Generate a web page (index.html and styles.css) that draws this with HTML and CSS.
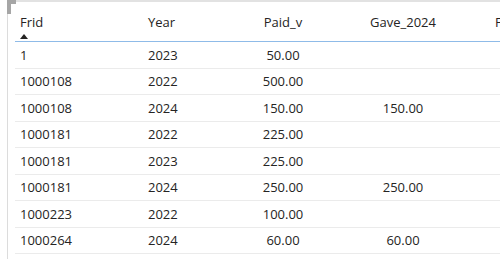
FILE: index.html
```html
<!DOCTYPE html>
<html>
<head>
<meta charset="utf-8">
<link rel="stylesheet" href="styles.css">
</head>
<body>
<div class="visual">
  <div class="corner"></div>
  <div class="table">
    <div class="row head">
      <div class="cell left"><span>Frid</span><svg class="sort" width="8" height="5" viewBox="0 0 8 5"><path d="M0 5 L4 0 L8 5 Z" fill="#252423"/></svg></div>
      <div class="cell left"><span>Year</span></div>
      <div class="cell center"><span>Paid_v</span></div>
      <div class="cell center"><span>Gave_2024</span></div>
      <div class="cell last"><span>Frid_2024</span></div>
    </div>
    <div class="row"><div class="cell left">1</div><div class="cell left">2023</div><div class="cell center">50.00</div><div class="cell center"></div><div class="cell last"></div></div>
    <div class="row"><div class="cell left">1000108</div><div class="cell left">2022</div><div class="cell center">500.00</div><div class="cell center"></div><div class="cell last"></div></div>
    <div class="row"><div class="cell left">1000108</div><div class="cell left">2024</div><div class="cell center">150.00</div><div class="cell center">150.00</div><div class="cell last"></div></div>
    <div class="row"><div class="cell left">1000181</div><div class="cell left">2022</div><div class="cell center">225.00</div><div class="cell center"></div><div class="cell last"></div></div>
    <div class="row"><div class="cell left">1000181</div><div class="cell left">2023</div><div class="cell center">225.00</div><div class="cell center"></div><div class="cell last"></div></div>
    <div class="row"><div class="cell left">1000181</div><div class="cell left">2024</div><div class="cell center">250.00</div><div class="cell center">250.00</div><div class="cell last"></div></div>
    <div class="row"><div class="cell left">1000223</div><div class="cell left">2022</div><div class="cell center">100.00</div><div class="cell center"></div><div class="cell last"></div></div>
    <div class="row"><div class="cell left">1000264</div><div class="cell left">2024</div><div class="cell center">60.00</div><div class="cell center">60.00</div><div class="cell last"></div></div>
  </div>
</div>
</body>
</html>
```
FILE: styles.css
```css
html, body {
  margin: 0;
  padding: 0;
  background: #ffffff;
  overflow: hidden;
}
body {
  font-family: "Open Sans", "Noto Sans", sans-serif;
  font-size: 13px;
  color: #252423;
  width: 500px;
  height: 259px;
}
.visual {
  position: relative;
  margin-left: 7px;
  border-left: 1px solid #dcdcdc;
  border-top: 2px solid #e2e2e2;
  padding-left: 7px;
  height: 257px;
}
.corner {
  position: absolute;
  left: -1px;
  top: -2px;
  width: 9px;
  height: 14px;
  background:
    linear-gradient(#a6a6a6, #a6a6a6) 0 0 / 9px 4px no-repeat,
    linear-gradient(#a6a6a6, #a6a6a6) 0 0 / 4px 14px no-repeat;
}
.table {
  display: flex;
  flex-direction: column;
}
.row {
  display: grid;
  grid-template-columns: 128px 80px 120px 120px 200px;
  height: 26.5px;
  box-sizing: border-box;
  border-bottom: 1px solid #ebebeb;
  white-space: nowrap;
}
.row.head {
  height: 40px;
  border-bottom: 1px solid #8fbbe8;
}
.cell {
  display: flex;
  align-items: center;
  padding: 0 5px;
  line-height: 18px;
  overflow: hidden;
}
.cell.center {
  justify-content: center;
  padding: 0;
}
.cell.last {
  padding-left: 32px;
}
.head .cell {
  flex-direction: column;
  align-items: flex-start;
  justify-content: flex-start;
  padding-top: 11px;
}
.head .cell.center {
  align-items: center;
}
.sort {
  display: block;
  margin-top: 3px;
}
```
